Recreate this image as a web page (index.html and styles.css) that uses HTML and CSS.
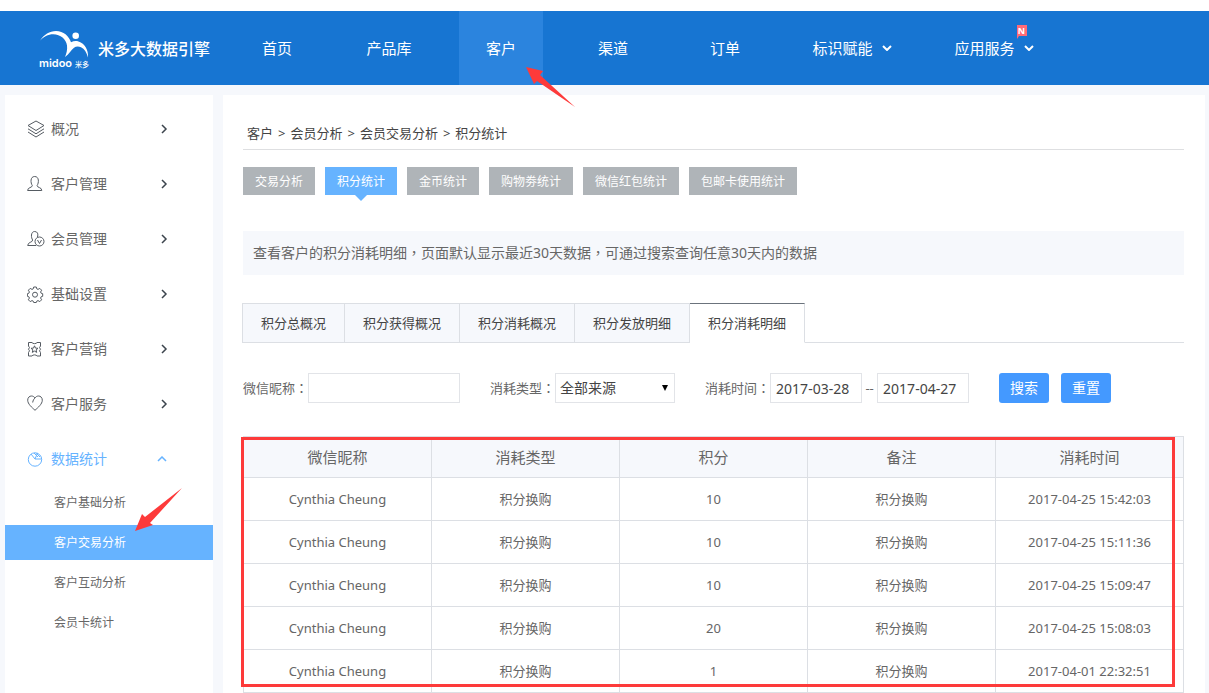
FILE: index.html
```
<!DOCTYPE html>
<html lang="zh-CN">
<head>
<meta charset="utf-8">
<meta name="viewport" content="width=device-width, initial-scale=1">
<title>积分统计 - 米多大数据引擎</title>
<link rel="stylesheet" href="styles.css">
</head>
<body>
<header class="header">
  <a class="brand" href="#">
    <svg class="brand-mark" viewBox="0 0 50 38" aria-hidden="true">
      <path d="M0 11.700C4 5.500 9.500 2 16 2c7.500 0 13 5 15 11.300C33.500 12 36 11.800 38.500 12.500 45 14.500 48.500 21 48 28.500 46.500 23.500 44.500 20 41 18.300c-2.500-1.200-5-1-7 .5-3 2.500-5 6.500-9 9.200 1.500-3.500 2.500-7.500 2-11.500C26.300 10.500 20.500 5.300 13.300 5.300 8 5.300 3.500 8 0 11.700z"/>
      <circle cx="35.700" cy="6.700" r="3.300"/>
      <text class="mark-latin" x="-1" y="38">midoo</text>
      <text class="mark-cjk" x="35" y="38">米多</text>
    </svg>
    <span class="brand-name">米多大数据引擎</span>
  </a>
  <nav class="nav" aria-label="主导航">
    <div class="nav-col"><a class="nav-link" href="#">首页</a></div>
    <div class="nav-col"><a class="nav-link" href="#">产品库</a></div>
    <div class="nav-col">
      <a class="nav-link active" href="#">客户</a>
      <svg class="pointer pointer-nav" viewBox="0 0 50 42" aria-hidden="true"><path d="M0 0l17 4-3 4 35 32L11 14l-3 3z"/></svg>
    </div>
    <div class="nav-col"><a class="nav-link" href="#">渠道</a></div>
    <div class="nav-col"><a class="nav-link" href="#">订单</a></div>
    <div class="nav-col wide">
      <a class="nav-link" href="#">标识赋能
        <svg class="caret" viewBox="0 0 10 6" aria-hidden="true"><path d="M1 1l4 4 4-4"/></svg></a>
    </div>
    <div class="nav-col wide">
      <a class="nav-link" href="#">应用服务
        <svg class="caret" viewBox="0 0 10 6" aria-hidden="true"><path d="M1 1l4 4 4-4"/></svg>
        <span class="flag">N</span></a>
    </div>
  </nav>
</header>

<div class="layout">
  <aside class="sidebar">
    <ul class="menu">
      <li><a class="menu-link" href="#">
        <svg class="icon" viewBox="0 0 18 18" aria-hidden="true"><path d="M9 1l8 4.500L9 10.500 1 5.500zM1 8.800l8 5 8-5M1 12l8 5 8-5"/></svg>
        <span>概况</span>
        <svg class="arrow" viewBox="0 0 6 8" aria-hidden="true"><path d="M1 0L5 4 1 8"/></svg></a></li>
      <li><a class="menu-link" href="#">
        <svg class="icon" viewBox="0 0 18 18" aria-hidden="true"><path d="M5.300 10.500C3.500 8 3 1.500 7.700 1.500s4.200 6.500 2.400 9c0 2.500 4.700 1.500 4.700 5H.6c0-3.500 4.700-2.500 4.700-5z"/></svg>
        <span>客户管理</span>
        <svg class="arrow" viewBox="0 0 6 8" aria-hidden="true"><path d="M1 0L5 4 1 8"/></svg></a></li>
      <li><a class="menu-link" href="#">
        <svg class="icon" viewBox="0 0 18 18" aria-hidden="true"><path d="M10.500 7C11.500 4 10.500 1.500 7.700 1.500 3.500 1.500 4 8 5.700 10c0 2.500-5 2-5 5.500h8.500"/><circle cx="12.500" cy="11.500" r="4.500"/><path d="M10.500 10l2 3.500 2-3.500"/></svg>
        <span>会员管理</span>
        <svg class="arrow" viewBox="0 0 6 8" aria-hidden="true"><path d="M1 0L5 4 1 8"/></svg></a></li>
      <li><a class="menu-link" href="#">
        <svg class="icon" viewBox="0 0 18 18" aria-hidden="true"><path d="M6.700 2h2.600l.5 1.900 1.200.5 1.800-1 1.800 1.800-1 1.800.5 1.200 1.600.5v2.600l-1.600.5-.5 1.200 1 1.800-1.800 1.800-1.800-1-1.200.5-.5 1.400H6.700l-.5-1.400-1.200-.5-1.800 1-1.800-1.800 1-1.800-.5-1.200-1.500-.5V8.700l1.500-.5.500-1.200-1-1.800 1.800-1.800 1.800 1 1.200-.5z"/><circle cx="8" cy="9.700" r="2.500"/></svg>
        <span>基础设置</span>
        <svg class="arrow" viewBox="0 0 6 8" aria-hidden="true"><path d="M1 0L5 4 1 8"/></svg></a></li>
      <li><a class="menu-link" href="#">
        <svg class="icon" viewBox="0 0 18 18" aria-hidden="true"><path d="M5 2.500H1.500v3.500M1.500 12.500V16H5M10 2.500h3.500v3.500M13.500 12.500V16H10M5 2.500c.5 1.500 4.500 1.500 5 0M5 16c.5-1.500 4.500-1.500 5 0M1.500 6l1 1.600-1 1.600 1 1.600-1 1.700M13.500 6l-1 1.600 1 1.600-1 1.600 1 1.700"/><path d="M7.500 5.800l1 2.300 2.500.2-1.900 1.600.6 2.500-2.200-1.300-2.200 1.300.6-2.500L4 8.300l2.500-.2z"/></svg>
        <span>客户营销</span>
        <svg class="arrow" viewBox="0 0 6 8" aria-hidden="true"><path d="M1 0L5 4 1 8"/></svg></a></li>
      <li><a class="menu-link" href="#">
        <svg class="icon" viewBox="0 0 18 18" aria-hidden="true"><path d="M8 15.300C5 12.500.7 9 .7 5.200.7 2.500 2.500 1 4.500 1 6 1 7.200 1.800 8 3c.8-1.200 2-2 3.500-2 2 0 3.800 1.500 3.800 4.200C15.300 9 11 12.500 8 15.300zM8 3C6.800 4.200 6 5.200 5.700 7.500"/></svg>
        <span>客户服务</span>
        <svg class="arrow" viewBox="0 0 6 8" aria-hidden="true"><path d="M1 0L5 4 1 8"/></svg></a></li>
      <li><a class="menu-link open" href="#">
        <svg class="icon" viewBox="0 0 18 18" aria-hidden="true"><circle cx="8" cy="9.500" r="6.700"/><path d="M4 4l4 5h6.700M8 9l2.500-6M7 3l4 4M9.500 3.500l3.500 3.500"/></svg>
        <span>数据统计</span>
        <svg class="arrow-up" viewBox="0 0 10 6" aria-hidden="true"><path d="M1 5l4-4 4 4"/></svg></a>
        <ul class="submenu">
          <li><a class="sub-link" href="#">客户基础分析</a></li>
          <li><a class="sub-link current" href="#">客户交易分析</a>
            <svg class="pointer pointer-menu" viewBox="0 0 48 44" aria-hidden="true"><path d="M0 43l7-17 3 3L47 0 15 35l3 2z"/></svg></li>
          <li><a class="sub-link" href="#">客户互动分析</a></li>
          <li><a class="sub-link" href="#">会员卡统计</a></li>
        </ul>
      </li>
    </ul>
  </aside>

  <main class="main">
    <nav class="crumbs" aria-label="面包屑">
      <a href="#">客户</a><span>&gt;</span><a href="#">会员分析</a><span>&gt;</span><a href="#">会员交易分析</a><span>&gt;</span><a href="#">积分统计</a>
    </nav>

    <div class="chips">
      <button class="chip" type="button">交易分析</button>
      <button class="chip selected" type="button">积分统计</button>
      <button class="chip" type="button">金币统计</button>
      <button class="chip" type="button">购物劵统计</button>
      <button class="chip" type="button">微信红包统计</button>
      <button class="chip" type="button">包邮卡使用统计</button>
    </div>

    <p class="notice">查看客户的积分消耗明细<span class="punct" lang="zh-TW">，</span>页面默认显示最近30天数据<span class="punct" lang="zh-TW">，</span>可通过搜索查询任意30天内的数据</p>

    <div class="tabs" role="tablist">
      <button class="tab" type="button" role="tab">积分总概况</button>
      <button class="tab" type="button" role="tab">积分获得概况</button>
      <button class="tab" type="button" role="tab">积分消耗概况</button>
      <button class="tab" type="button" role="tab">积分发放明细</button>
      <button class="tab active" type="button" role="tab" aria-selected="true">积分消耗明细</button>
    </div>

    <form class="filters">
      <div class="field">
        <label for="nick">微信昵称<span class="punct" lang="zh-TW">：</span></label>
        <input class="box nick" id="nick" type="text">
      </div>
      <div class="field">
        <label for="kind">消耗类型<span class="punct" lang="zh-TW">：</span></label>
        <span class="select"><select class="box" id="kind"><option>全部来源</option></select></span>
      </div>
      <div class="field">
        <label for="from">消耗时间<span class="punct" lang="zh-TW">：</span></label>
        <input class="box date" id="from" type="text" value="2017-03-28">
        <span class="dash">--</span>
        <input class="box date" type="text" value="2017-04-27" aria-label="结束时间">
      </div>
      <div class="actions">
        <button class="btn" type="button">搜索</button>
        <button class="btn" type="reset">重置</button>
      </div>
    </form>

    <div class="table-wrap">
      <table class="table">
        <thead>
          <tr><th>微信昵称</th><th>消耗类型</th><th>积分</th><th>备注</th><th>消耗时间</th></tr>
        </thead>
        <tbody>
          <tr><td>Cynthia Cheung</td><td>积分换购</td><td>10</td><td>积分换购</td><td>2017-04-25 15:42:03</td></tr>
          <tr><td>Cynthia Cheung</td><td>积分换购</td><td>10</td><td>积分换购</td><td>2017-04-25 15:11:36</td></tr>
          <tr><td>Cynthia Cheung</td><td>积分换购</td><td>10</td><td>积分换购</td><td>2017-04-25 15:09:47</td></tr>
          <tr><td>Cynthia Cheung</td><td>积分换购</td><td>20</td><td>积分换购</td><td>2017-04-25 15:08:03</td></tr>
          <tr><td>Cynthia Cheung</td><td>积分换购</td><td>1</td><td>积分换购</td><td>2017-04-01 22:32:51</td></tr>
        </tbody>
      </table>
      <div class="highlight"></div>
    </div>
  </main>
</div>
</body>
</html>
```

FILE: styles.css
```
* { box-sizing: border-box; }

body {
  margin: 0;
  min-height: 100vh;
  display: flex;
  flex-direction: column;
  background: #f6f8fc;
  color: #666;
  font: 13px/20px "Noto Sans", "Noto Sans CJK SC", sans-serif;
}

a { color: inherit; text-decoration: none; }
ul { margin: 0; padding: 0; list-style: none; }
button, input, select { font: inherit; color: inherit; margin: 0; }

/* Centred full-width punctuation */
.punct { font-family: "Noto Sans CJK TC", sans-serif; line-height: 1; }

/* Header */
.header {
  display: flex;
  height: 85px;
  border-top: 11px solid #fff;
  background: #1775d2;
  color: #fff;
}

.brand {
  flex: none;
  display: flex;
  align-items: center;
  gap: 8px;
  width: 221px;
  padding-left: 40px;
}

.brand-mark { width: 50px; height: 38px; fill: #fff; overflow: visible; }
.mark-latin { font: 600 11px Inter, sans-serif; }
.mark-cjk { font: 500 7px "Noto Sans CJK SC", sans-serif; }
.brand-name { font-size: 16px; font-weight: 500; white-space: nowrap; font-family: "Noto Sans CJK SC", sans-serif; }

.nav { display: flex; font-size: 15px; white-space: nowrap; }
.nav-col { position: relative; display: flex; justify-content: center; width: 112px; }
.nav-col.wide { width: 142px; }

.nav-link {
  position: relative;
  display: flex;
  align-items: center;
  gap: 9px;
  padding: 0 27px;
}

.nav-link.active { background: #2b84de; }
.caret { width: 10px; height: 6px; fill: none; stroke: #fff; stroke-width: 2; }

.flag {
  position: absolute;
  top: 14px;
  right: 34px;
  width: 10px;
  height: 11px;
  background: #ff6b78;
  font-size: 9px;
  font-weight: 700;
  line-height: 11px;
  text-align: center;
}

.flag::after {
  content: "";
  position: absolute;
  left: 0;
  top: 11px;
  border-top: 3px solid #ff6b78;
  border-right: 2px solid transparent;
}

.pointer { position: absolute; z-index: 2; fill: #fd3a3a; pointer-events: none; }
.pointer-nav { left: 81px; top: 56px; width: 50px; height: 42px; }
.pointer-menu { left: 130px; bottom: 28px; width: 48px; height: 44px; }

/* Page columns */
.layout { flex: 1; display: flex; gap: 10px; padding: 10px 4px 0 5px; }
.sidebar { flex: none; width: 208px; padding-top: 17px; background: #fff; }

.menu { display: flex; flex-direction: column; gap: 20px; }

.menu-link {
  display: flex;
  align-items: center;
  height: 35px;
  padding: 0 46px 1px 22px;
  font-size: 14px;
}

.menu-link span { flex: 1; margin-left: 6px; }
.menu-link.open { color: #66b3ff; }
.icon { width: 18px; height: 18px; fill: none; stroke: #555b62; stroke-width: 1; }
.open .icon { stroke: #66b3ff; }
.arrow { width: 6px; height: 8px; fill: none; stroke: #3c444d; stroke-width: 1.5; overflow: visible; }
.arrow-up { width: 10px; height: 6px; fill: none; stroke: #66b3ff; stroke-width: 1.5; }

.submenu { display: flex; flex-direction: column; gap: 5px; padding-top: 8px; }
.submenu li { position: relative; }
.sub-link { display: block; padding-left: 49px; font-size: 12px; line-height: 35px; }
.sub-link.current { background: #66b3ff; color: #fff; }

.main { flex: 1; min-width: 0; padding: 28px 21px 0 20px; background: #fff; }

.crumbs {
  display: flex;
  gap: 5px;
  padding: 0 4px 5px;
  border-bottom: 1px solid #dedfe1;
  color: #444;
  line-height: 21px;
}

/* Report switch */
.chips { display: flex; gap: 10px; margin-top: 17px; }

.chip {
  position: relative;
  height: 28px;
  padding: 1px 12px 0;
  border: 0;
  background: #afb4b8;
  color: #fff;
  font-size: 12px;
}

.chip.selected { background: #66b3ff; }

.chip.selected::after {
  content: "";
  position: absolute;
  left: 50%;
  top: 100%;
  margin-left: -6px;
  border: 6px solid transparent;
  border-top-color: #66b3ff;
  border-bottom: 0;
}

.notice { margin: 36px 0 28px; padding: 12px 10px; background: #f6f8fc; font-size: 14px; }

.tabs { display: flex; box-shadow: inset 0 -1px #dcdfe4; margin-left: -1px; }

.tab {
  height: 40px;
  padding: 0 18px;
  border: 1px solid #dcdfe4;
  border-left: 0;
  background: #f6f8fc;
  color: #444;
}

.tab:first-child { border-left: 1px solid #dcdfe4; }
.tab.active { border-top-color: #6b737c; border-bottom-color: #fff; background: #fff; }

/* Filters */
.filters { display: flex; align-items: center; gap: 30px; margin: 30px 0 33px; white-space: nowrap; }
.field { display: flex; align-items: center; }

.box {
  height: 30px;
  padding: 0 5px;
  border: 1px solid #e2e4e8;
  border-radius: 0;
  background: #fff;
  color: #444;
  font-size: 14px;
}

.nick { width: 152px; }
.date { width: 92px; }
.dash { width: 15px; text-align: center; }
.select { position: relative; }
.select .box { display: block; width: 120px; padding: 0 4px; appearance: none; }

.select::after {
  content: "";
  position: absolute;
  right: 7px;
  top: 12px;
  border: 3px solid transparent;
  border-top: 6px solid #000;
  border-bottom: 0;
  pointer-events: none;
}

.actions { display: flex; gap: 12px; }

.btn {
  width: 50px;
  height: 30px;
  padding: 0;
  border: 0;
  border-radius: 3px;
  background: #4499ff;
  color: #fff;
  font-size: 14px;
}

/* Records */
.table-wrap { position: relative; }
.table { width: 100%; border-collapse: collapse; table-layout: fixed; text-align: center; }
.table th, .table td { height: 43px; padding: 0; border: 1px solid #dcdfe4; }
.table th { height: 41px; background: #f6f8fc; font-size: 15px; font-weight: 400; }

.highlight {
  position: absolute;
  top: 1px;
  right: 9px;
  bottom: 6px;
  left: -2px;
  border: 3px solid #fd3a3a;
  pointer-events: none;
}
```
